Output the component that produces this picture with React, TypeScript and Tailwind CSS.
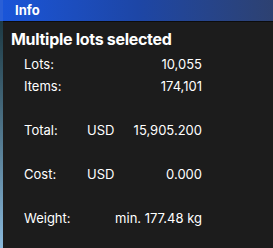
export default function App() {
  const rows: { label: string; cur?: string; value: string; gap?: boolean }[] = [
    { label: "Lots:", value: "10,055" },
    { label: "Items:", value: "174,101" },
    { label: "", value: "", gap: true },
    { label: "Total:", cur: "USD", value: "15,905.200" },
    { label: "", value: "", gap: true },
    { label: "Cost:", cur: "USD", value: "0.000" },
    { label: "", value: "", gap: true },
    { label: "Weight:", value: "min. 177.48 kg" },
  ];

  return (
    <div className="flex w-[273px] h-[248px] overflow-hidden font-['Inter',sans-serif] text-white">
      {/* desktop behind the window */}
      <div className="w-[3px] flex flex-col">
        <div className="h-[21px] bg-[#2a5fd6]" />
        <div className="flex-1 bg-gradient-to-b from-[#1d3a44] to-[#8ab9dc]" />
      </div>

      <div className="flex-1 flex flex-col bg-[#1c1c1c]">
        <div className="h-[21px] flex items-center pl-3 bg-gradient-to-r from-[#1a55d8] via-[#1d46a6] to-[#2d4171] border-b border-[#0c0c0c] box-content">
          <span className="text-[13px] font-bold leading-none">Info</span>
        </div>

        <div className="pl-2 pt-[7px]">
          <div className="text-[16px] font-bold leading-[20px] tracking-[-0.3px]">Multiple lots selected</div>
          <div className="mt-[5px] pl-[13px] w-[191px] text-[13px]">
            {rows.map((r, i) =>
              r.gap ? (
                <div key={i} className="h-[22px]" />
              ) : (
                <div key={i} className="grid grid-cols-[63px_1fr] h-[22px] items-center">
                  <span>{r.label}</span>
                  <div className="flex justify-between">
                    <span>{r.cur ?? ""}</span>
                    <span>{r.value}</span>
                  </div>
                </div>
              )
            )}
          </div>
        </div>
      </div>
    </div>
  );
}
